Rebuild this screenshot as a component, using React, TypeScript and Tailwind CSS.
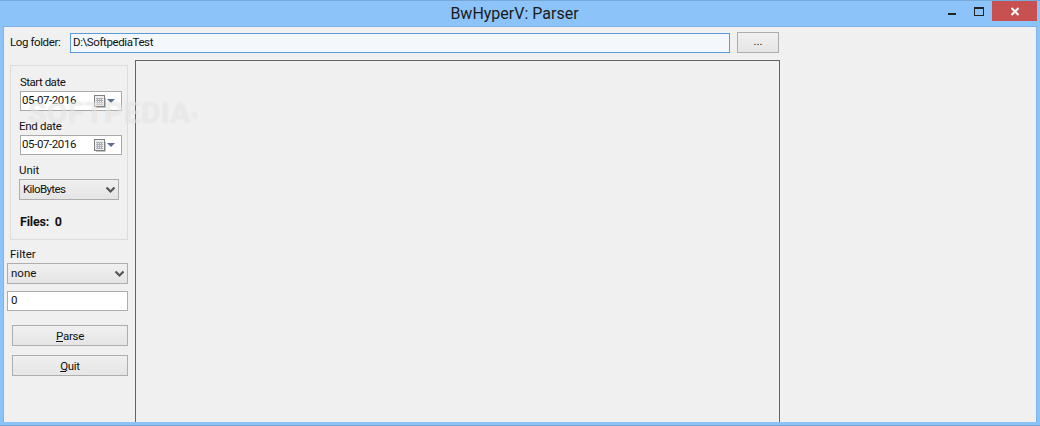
const F = "[font-family:Roboto,'Liberation_Sans',sans-serif]";

function Chevron() {
  return (
    <svg width="11" height="8" viewBox="0 0 11 8" className="shrink-0">
      <path d="M1.5 1.5 L5.5 5.5 L9.5 1.5" fill="none" stroke="#555" strokeWidth="2.2" />
    </svg>
  );
}

function Calendar() {
  return (
    <svg width="21" height="13" viewBox="0 0 21 13" className="shrink-0">
      <rect x="0.5" y="0.5" width="10" height="11" fill="#eeeeee" stroke="#808080" />
      <path d="M2 3.5h7M2 5.5h7M2 7.5h7M2 9.5h7M3.5 3v7M5.5 3v7M7.5 3v7" stroke="#a9aeb8" strokeWidth="1" />
      <path d="M11.5 3v9.5H2" fill="none" stroke="#c4c4c4" />
      <path d="M13 4h8l-4 4z" fill="#5b6f8f" />
    </svg>
  );
}

function DateField() {
  return (
    <div className="flex h-[20px] w-[102px] items-center border border-[#a9a9a9] bg-white pl-[1px] pr-[6px] text-[11.5px] tracking-[-0.4px] text-[#111]">
      <span className="flex-1 leading-none">05-07-2016</span>
      <Calendar />
    </div>
  );
}

function Select({ label, w, tight }: { label: string; w: string; tight?: boolean }) {
  return (
    <div className={`flex ${w} h-[21px] items-center justify-between border border-[#adadad] bg-gradient-to-b from-[#f0f0f0] to-[#e5e5e5] pl-[3px] pr-[2px] text-[11.5px] text-[#111]`}>
      <span className={tight ? "leading-none tracking-[-0.6px]" : "leading-none"}>{label}</span>
      <Chevron />
    </div>
  );
}

function Btn({ k, rest }: { k: string; rest: string }) {
  return (
    <div className="ml-[5px] flex h-[21px] w-[116px] items-center justify-center border border-[#adadad] bg-gradient-to-b from-[#f0f0f0] to-[#e5e5e5] pt-[2px] text-[11.5px] tracking-[-0.3px] text-[#111]">
      <span className="underline">{k}</span>
      <span>{rest}</span>
    </div>
  );
}

export default function App() {
  return (
    <div className={`${F} relative flex h-[426px] w-[1040px] flex-col overflow-hidden border-t border-[#76a9da] bg-[#8cc4f9]`}>
      <div className="relative flex h-[25px] shrink-0 items-center justify-center pr-[11px] text-[16px] text-[#1a1a1a]">
        BwHyperV: Parser
        <div className="absolute right-[3px] top-0 flex h-[20px] items-start">
          <div className="mr-[18px] mt-[12px] h-[2px] w-[8px] bg-[#222]" />
          <div className="mr-[8px] mt-[6px] h-[9px] w-[10px] border border-t-[2px] border-[#222]" />
          <div className="flex h-[20px] w-[45px] items-center justify-center bg-[#c75050]">
            <svg width="10" height="9" viewBox="0 0 10 9">
              <path d="M1.5 1 L8.5 8 M8.5 1 L1.5 8" stroke="#fff" strokeWidth="2" />
            </svg>
          </div>
        </div>
      </div>

      <div className="mx-[3px] flex min-h-0 flex-1 flex-col border-l border-r border-t border-[#7fb4e6] bg-[#f0f0f0]">
        <div className="flex h-[33px] shrink-0 items-start pt-[5px] text-[11.5px] text-[#111]">
          <span className="ml-[6px] mt-[5px] w-[60px] leading-none tracking-[-0.4px]">Log folder:</span>
          <div className="mt-[1px] flex h-[20px] w-[660px] items-center border border-[#5b9bd8] bg-[#f4f8fc] pl-[2px] leading-none tracking-[-0.4px]">
            D:\SoftpediaTest
          </div>
          <div className="ml-[7px] flex h-[21px] w-[42px] items-end justify-center border border-[#adadad] bg-gradient-to-b from-[#f0f0f0] to-[#e5e5e5] pb-[5px] leading-none">
            ...
          </div>
        </div>

        <div className="flex min-h-0 flex-1 pl-[3px]">
          <div className="flex w-[128px] shrink-0 flex-col">
            <div className="ml-[3px] mt-[5px] flex h-[175px] w-[118px] flex-col border border-[#dcdcdc] pl-[9px] pt-[10px] text-[11.5px] text-[#111]">
              <span className="h-[15px] leading-[12px] tracking-[-0.5px]">Start date</span>
              <DateField />
              <span className="-ml-[1px] mt-[9px] h-[15px] leading-[12px] tracking-[-0.3px]">End date</span>
              <DateField />
              <span className="-ml-[1px] mt-[9px] h-[15px] leading-[12px]">Unit</span>
              <div className="-ml-[1px] w-[100px]">
                <Select label="KiloBytes" w="w-[100px]" tight />
              </div>
              <span className="mt-[16px] text-[12.5px] font-bold leading-none tracking-[-0.2px]">Files:&nbsp; 0</span>
            </div>
            <span className="ml-[3px] mt-[8px] h-[15px] text-[11.5px] leading-[12px] text-[#111]">Filter</span>
            <Select label="none" w="w-[121px]" />
            <div className="mt-[7px] flex h-[20px] w-[121px] items-center border border-[#adadad] bg-white pl-[3px] text-[11.5px] leading-none text-[#111]">
              0
            </div>
            <div className="mt-[14px]">
              <Btn k="P" rest="arse" />
            </div>
            <div className="mt-[9px]">
              <Btn k="Q" rest="uit" />
            </div>
          </div>
          <div className="h-full w-[645px] border-l border-r border-t border-[#646464]" />
        </div>
      </div>

      <div className="h-[3px] shrink-0 bg-[#8cc4f9]" />
      <div className="h-px shrink-0 bg-[#76a9da]" />

      <div className="pointer-events-none absolute left-[28px] top-[89px] text-[30px] font-bold tracking-[0.4px] text-white/50 [text-shadow:0_0_1px_rgba(0,0,0,0.12)]">
        SOFTPEDIA<sup className="text-[9px] font-normal">®</sup>
      </div>
    </div>
  );
}
